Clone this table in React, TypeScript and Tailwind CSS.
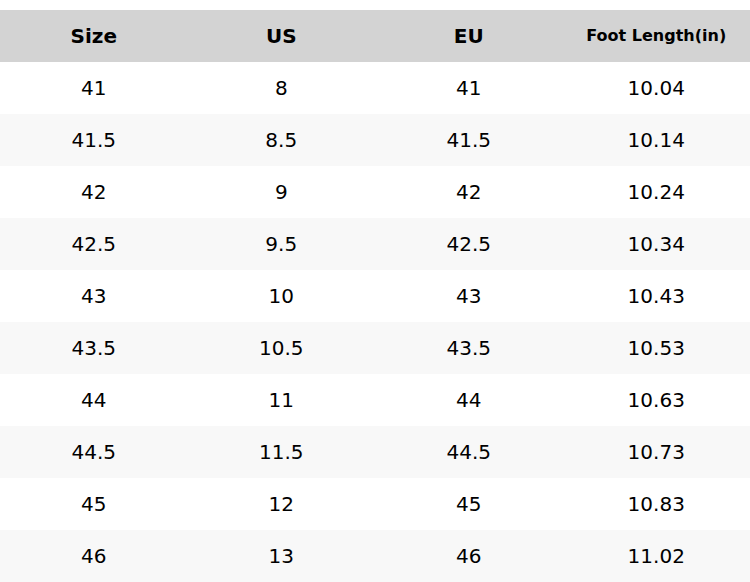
const rows = [
  ["41", "8", "41", "10.04"],
  ["41.5", "8.5", "41.5", "10.14"],
  ["42", "9", "42", "10.24"],
  ["42.5", "9.5", "42.5", "10.34"],
  ["43", "10", "43", "10.43"],
  ["43.5", "10.5", "43.5", "10.53"],
  ["44", "11", "44", "10.63"],
  ["44.5", "11.5", "44.5", "10.73"],
  ["45", "12", "45", "10.83"],
  ["46", "13", "46", "11.02"],
]

const SizeChart = () => {
  return (
    <div className="w-[750px] h-[582px] bg-white pt-[10px] font-['DejaVu_Sans',sans-serif] text-black overflow-hidden">
      <div className="grid grid-cols-4 h-[52px] bg-[#d3d3d3] font-bold items-center text-center">
        <div className="text-[20px]">Size</div>
        <div className="text-[20px]">US</div>
        <div className="text-[20px]">EU</div>
        <div className="text-[16px]">Foot Length(in)</div>
      </div>
      {rows.map((row, i) => (
        <div
          key={i}
          className={`grid grid-cols-4 h-[52px] items-center text-center text-[20px] ${
            i % 2 === 1 ? "bg-[#f8f8f8]" : "bg-white"
          }`}
        >
          {row.map((cell, j) => (
            <div key={j}>{cell}</div>
          ))}
        </div>
      ))}
    </div>
  )
}

export default function App() {
  return <SizeChart />
}
